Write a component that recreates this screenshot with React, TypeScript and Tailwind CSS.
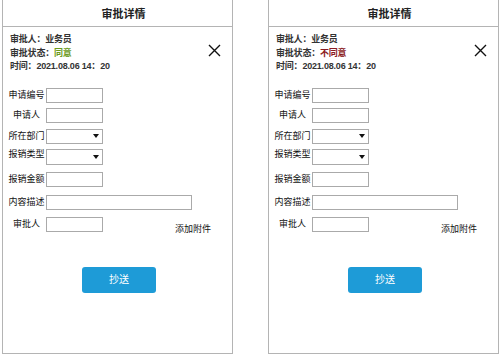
import React from 'react';

const FONT = "font-['Liberation_Sans','Noto_Sans_CJK_SC',sans-serif]";

function TextBox({ w = 'w-[57px]' }: { w?: string }) {
  return <div className={`${w} h-[15px] border border-[#aaaaaa] bg-white`} />;
}

function SelectBox({ h = 'h-[15px]' }: { h?: string }) {
  return (
    <div className={`w-[57px] ${h} border border-[#aaaaaa] bg-white flex items-center justify-end pr-[3px]`}>
      <svg width="6" height="4" viewBox="0 0 6 4">
        <path d="M0 0 L6 0 L3 4 Z" fill="#111" />
      </svg>
    </div>
  );
}

function Label({ children }: { children: React.ReactNode }) {
  return <span className="w-[37px] ml-[5px] mr-[1px] text-center text-[9px] leading-[15px] text-[#111] whitespace-nowrap">{children}</span>;
}

function Panel({ status, statusColor }: { status: string; statusColor: string }) {
  return (
    <div className="w-[231px] h-[354px] border-x border-b border-[#b4b4b4] bg-white flex flex-col">
      <div className="h-[27px] border-b border-[#b4b4b4] flex items-center justify-center pl-[12px] pt-[2px]">
        <span className="text-[11px] font-bold text-[#222]">审批详情</span>
      </div>

      <div className="flex items-center justify-between pt-[6px] pl-[7px] pr-[11px]">
        <div className="text-[9px] leading-[13.5px] font-bold text-[#333] tracking-[-0.2px]">
          <div>审批人：业务员</div>
          <div>
            审批状态：<span className={statusColor}>{status}</span>
          </div>
          <div>时间：2021.08.06 14：20</div>
        </div>
        <svg width="13" height="13" viewBox="0 0 13 13" className="mb-[5px]">
          <path d="M1 1 L12 12 M12 1 L1 12" stroke="#111" strokeWidth="1.4" />
        </svg>
      </div>

      <div className="flex flex-col mt-[14px]">
        <div className="flex items-center h-[15px]">
          <Label>申请编号</Label>
          <TextBox />
        </div>
        <div className="flex items-center h-[15px] mt-[5px]">
          <Label>申请人</Label>
          <TextBox />
        </div>
        <div className="flex items-center h-[15px] mt-[6px]">
          <Label>所在部门</Label>
          <SelectBox />
        </div>
        <div className="flex items-start h-[16px] mt-[5px]">
          <span className="w-[37px] ml-[5px] mr-[1px] text-center text-[9px] leading-[10px] text-[#111] whitespace-nowrap">报销类型</span>
          <SelectBox h="h-[16px]" />
        </div>
        <div className="flex items-center h-[15px] mt-[7px]">
          <Label>报销金额</Label>
          <TextBox />
        </div>
        <div className="flex items-center h-[15px] mt-[8px]">
          <Label>内容描述</Label>
          <TextBox w="w-[146px]" />
        </div>
        <div className="flex items-start h-[15px] mt-[7px]">
          <Label>审批人</Label>
          <TextBox />
          <span className="ml-[72px] mt-[5px] text-[9px] leading-[15px] text-[#111]">添加附件</span>
        </div>
      </div>

      <button className="mt-[35px] ml-[79px] w-[74px] h-[26px] rounded-[3px] bg-[#1e9bd7] text-white text-[10px] flex items-center justify-center">
        抄送
      </button>
    </div>
  );
}

export default function App() {
  return (
    <div className={`w-[500px] h-[358px] bg-white flex gap-[35px] pl-[2px] ${FONT}`}>
      <Panel status="同意" statusColor="text-[#6b9a1c]" />
      <Panel status="不同意" statusColor="text-[#8b1a22]" />
    </div>
  );
}
